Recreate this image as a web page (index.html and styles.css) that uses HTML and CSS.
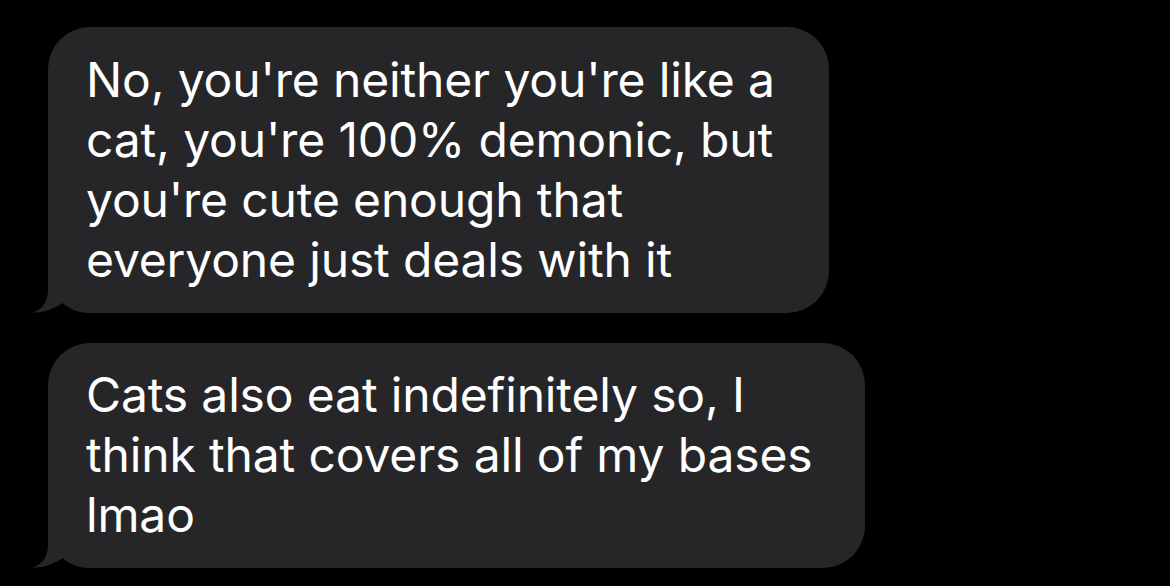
FILE: index.html
```html
<!DOCTYPE html>
<html>
<head>
<meta charset="utf-8">
<link rel="stylesheet" href="styles.css">
</head>
<body>
<div class="thread">
  <div class="bubble b1">
    <svg class="tail" width="60" height="45" viewBox="0 0 60 45"><path d="M15,0 L15,22 C15,34 9,41 0,44.5 C12,45 22,40 30,35 C38,42 46,45 60,45 L60,0 Z" fill="#262629"/></svg>
    <p class="text">No, you're neither you're like a<br>cat, you're 100% demonic, but<br>you're cute enough that<br>everyone just deals with it</p>
  </div>
  <div class="bubble b2">
    <svg class="tail" width="60" height="45" viewBox="0 0 60 45"><path d="M15,0 L15,22 C15,34 9,41 0,44.5 C12,45 22,40 30,35 C38,42 46,45 60,45 L60,0 Z" fill="#262629"/></svg>
    <p class="text">Cats also eat indefinitely so, I<br>think that covers all of my bases<br>lmao</p>
  </div>
</div>
</body>
</html>
```
FILE: styles.css
```css
html, body {
  margin: 0;
  padding: 0;
  background: #000;
}
body {
  width: 1170px;
  height: 586px;
  overflow: hidden;
}
.thread {
  display: flex;
  flex-direction: column;
  align-items: flex-start;
  gap: 30px;
  padding: 27px 0 0 48px;
}
.bubble {
  position: relative;
  box-sizing: border-box;
  background: #262629;
  border-radius: 42px;
  padding: 23px 38px;
}
.b1 { width: 781px; }
.b2 { width: 817px; padding-top: 22px; padding-bottom: 23px; }
.text {
  position: relative;
  z-index: 1;
  margin: 0;
  color: #fff;
  font-family: "Inter", "Liberation Sans", sans-serif;
  font-size: 48px;
  line-height: 60px;
  letter-spacing: -0.15px;
  white-space: nowrap;
}
.tail {
  position: absolute;
  left: -15px;
  bottom: 0;
  display: block;
  z-index: 0;
}
```
